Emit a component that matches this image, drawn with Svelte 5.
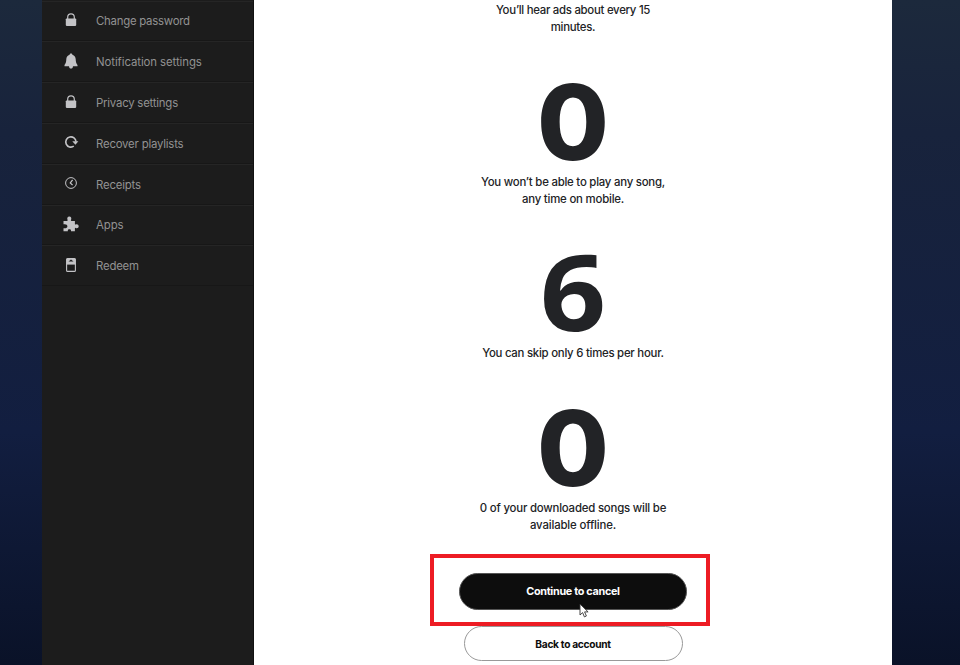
<script lang="ts">
  type Item = { label: string; icon: string; spacing: number };
  type Stat = { value: string; lines: { text: string; spacing: number }[] };

  const items: Item[] = [
    { label: "Change password", icon: "lock", spacing: -0.25 },
    { label: "Notification settings", icon: "bell", spacing: -0.08 },
    { label: "Privacy settings", icon: "lock", spacing: -0.22 },
    { label: "Recover playlists", icon: "recover", spacing: -0.2 },
    { label: "Receipts", icon: "clock", spacing: -0.18 },
    { label: "Apps", icon: "puzzle", spacing: -0.1 },
    { label: "Redeem", icon: "card", spacing: -0.2 },
  ];

  const stats: Stat[] = [
    {
      value: "0",
      lines: [
        { text: "You won’t be able to play any song,", spacing: -0.23 },
        { text: "any time on mobile.", spacing: -0.2 },
      ],
    },
    { value: "6", lines: [{ text: "You can skip only 6 times per hour.", spacing: -0.25 }] },
    {
      value: "0",
      lines: [
        { text: "0 of your downloaded songs will be", spacing: -0.2 },
        { text: "available offline.", spacing: -0.16 },
      ],
    },
  ];
</script>

<div class="page">
  <nav class="sidebar">
    {#each items as item (item.label)}
      <a class="item" href="#top">
        <svg class="icon" viewBox="0 0 16 16" aria-hidden="true">
          {#if item.icon === "lock"}
            <path d="M4.7 7V5.2a3.3 3.3 0 0 1 6.6 0V7" fill="none" stroke="currentColor" stroke-width="1.2" />
            <rect x="2.8" y="6.5" width="10.4" height="7.4" rx=".8" fill="currentColor" />
          {:else if item.icon === "bell"}
            <path
              d="M8 .5c.8 0 1.3.5 1.4 1.2 2.200.6 3.200 2.300 3.300 4.600.1 2.700.5 4.100 1.800 5.700v1.200H10c-.1 1.500-.8 2.400-2 2.400S6.100 14.700 6 13.200H1.500V12c1.300-1.600 1.700-3 1.800-5.700.1-2.300 1.100-4 3.300-4.600C6.700 1 7.200.5 8 .5z"
              fill="currentColor"
            />
          {:else if item.icon === "recover"}
            <path d="M10.8 12.2A5.1 5.1 0 1 1 13 7.8" fill="none" stroke="currentColor" stroke-width="1.6" />
            <path d="M9.3 7.2h6.100l-3 3.500z" fill="currentColor" />
          {:else if item.icon === "clock"}
            <circle cx="8" cy="8" r="5.4" fill="none" stroke="currentColor" stroke-width="1" />
            <path d="M9.6 4.900 7.300 7.900l2.300 2.200" fill="none" stroke="currentColor" stroke-width="1.3" />
          {:else if item.icon === "puzzle"}
            <path
              d="M.5 4.900h3.600c.5 0 .7-.4.500-.9C3.700 2.300 4.700.6 6.300.6S8.900 2.300 8 4c-.2.500 0 .9.500.9h3.400v3.200c0 .5.400.6.800.400 1.500-.7 3 .2 3 1.700s-1.500 2.400-3 1.700c-.4-.2-.8 0-.8.400v3H8v-.6c0-.9-.7-1.400-1.600-1.400s-1.600.5-1.600 1.400v.6H.5v-3.100c2.300.5 3.900-.4 3.900-2S2.800 7.800.5 8.300z"
              fill="currentColor"
            />
          {:else}
            <rect x="3.600" y="1.600" width="8.800" height="12.800" rx="1" fill="none" stroke="currentColor" stroke-width="1.1" />
            <path d="M3.600 1.600h8.800v6H3.600z" fill="currentColor" />
            <path d="M5.500 4.400h5L8 2.600z" fill="#1c1c1c" />
          {/if}
        </svg>
        <span style="letter-spacing:{item.spacing}px">{item.label}</span>
      </a>
    {/each}
  </nav>

  <main class="content">
    <p class="text intro">
      <span>You’ll hear ads about every 15</span>
      <span>minutes.</span>
    </p>
    {#each stats as stat}
      <div class="number" class:six={stat.value === "6"}>{stat.value}</div>
      <p class="text">
        {#each stat.lines as line}
          <span style="letter-spacing:{line.spacing}px">{line.text}</span>
        {/each}
      </p>
    {/each}
    <div class="highlight">
      <button class="primary">Continue to cancel</button>
      <svg class="cursor" viewBox="0 0 10 15" aria-hidden="true">
        <path d="M1 1v11l2.600-2.400 1.800 4.300 2-.9-1.800-4.100h3.500z" fill="#fff" stroke="#333" stroke-width=".9" />
      </svg>
    </div>
    <button class="secondary">Back to account</button>
  </main>
</div>

<style>
  :global(body) {
    margin: 0;
  }
  .page {
    display: flex;
    box-sizing: border-box;
    width: 960px;
    height: 665px;
    padding: 0 68px 0 42px;
    overflow: hidden;
    background: linear-gradient(#1c293c 0, #18233c 20%, #121e40 65%, #0a1228 100%);
    font-family: Inter, "Liberation Sans", sans-serif;
  }
  .sidebar {
    flex: none;
    box-sizing: border-box;
    width: 212px;
    padding-top: 0.6px;
    background: #1c1c1c;
    border-right: 1px solid #111;
  }
  .item {
    display: flex;
    align-items: center;
    box-sizing: border-box;
    height: 40.8px;
    padding: 1px 0 0 21px;
    border-top: 1px solid #252525;
    border-bottom: 1px solid #171717;
    color: #929292;
    font-size: 11.4px;
    text-decoration: none;
  }
  .icon {
    width: 16px;
    height: 16px;
    margin: -3px 17px 0 0;
    color: #c3c3c6;
  }
  .content {
    display: flex;
    flex: 1;
    flex-direction: column;
    align-items: center;
    background: #fff;
  }
  .text {
    display: flex;
    flex-direction: column;
    margin: 0;
    color: #222326;
    font-size: 11.4px;
    font-weight: 450;
    line-height: 17.3px;
    text-align: center;
    white-space: nowrap;
  }
  .intro {
    padding-top: 2.2px;
    letter-spacing: -0.28px;
  }
  .number {
    height: 103px;
    margin-top: 34px;
    color: #222326;
    font-size: 104px;
    font-weight: 800;
    line-height: 103px;
  }
  .six {
    font-family: "Open Sans", sans-serif;
    font-size: 105px;
    font-weight: 700;
    line-height: 97px;
    transform: scaleX(1.1);
  }
  .highlight {
    position: relative;
    display: flex;
    flex: none;
    align-items: center;
    justify-content: center;
    box-sizing: border-box;
    width: 280px;
    height: 72px;
    margin: 20px 6px 0 0;
    border: 4px solid #ed1c24;
  }
  button {
    flex: none;
    box-sizing: border-box;
    padding: 0;
    border-radius: 20px;
    font-family: inherit;
    font-weight: 700;
  }
  .primary {
    width: 228px;
    height: 37px;
    margin: 2px 0 0 6px;
    border: 1px solid #555;
    background: #0d0d0d;
    color: #fff;
    font-size: 10.8px;
    letter-spacing: -0.3px;
  }
  .cursor {
    position: absolute;
    top: 45px;
    left: 145px;
    width: 10px;
    height: 15px;
  }
  .secondary {
    width: 219px;
    height: 35px;
    border: 1px solid #999;
    background: #fff;
    color: #0d0d0d;
    font-size: 10.2px;
    letter-spacing: -0.3px;
  }
</style>
